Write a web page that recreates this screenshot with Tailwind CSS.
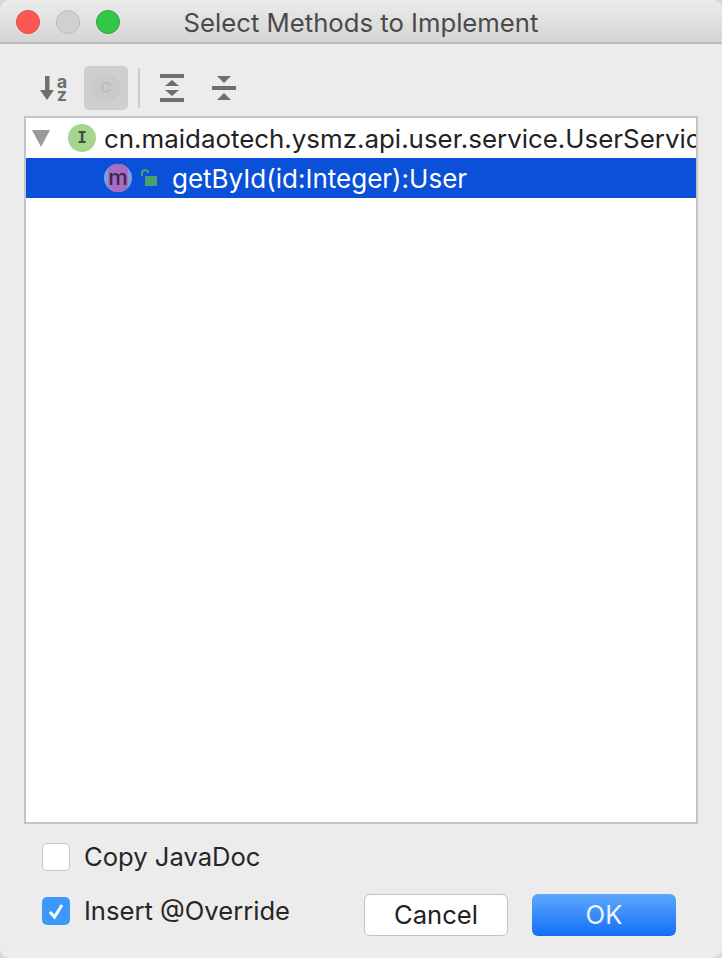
<!DOCTYPE html>
<html lang="en">
<head>
    <meta charset="UTF-8">
    <meta name="viewport" content="width=device-width, initial-scale=1.0">
    <title>Select Methods to Implement</title>
    <script src="https://cdn.jsdelivr.net/npm/@tailwindcss/browser@4"></script>
</head>
<body class="bg-[#d8d8d8] font-['Inter','Liberation_Sans',sans-serif]">
    <div class="w-[722px] h-[958px] bg-[#ececec] rounded-[10px] overflow-hidden flex flex-col">

        <!-- title bar -->
        <div class="relative h-[44px] shrink-0 flex items-center justify-center bg-gradient-to-b from-[#ebebeb] to-[#d5d5d5] border-b-2 border-[#bdbdbd]">
            <div class="absolute left-[16px] top-[10px] flex gap-[16px]">
                <div class="w-[24px] h-[24px] rounded-full bg-[#fc5753] border border-[#df4744]"></div>
                <div class="w-[24px] h-[24px] rounded-full bg-[#d0d0d0] border border-[#bcbcbc]"></div>
                <div class="w-[24px] h-[24px] rounded-full bg-[#33c748] border border-[#27aa35]"></div>
            </div>
            <span class="text-[25.7px] leading-none text-[#4a4a4a] mt-[3px]">Select Methods to Implement</span>
        </div>

        <!-- toolbar -->
        <div class="h-[72px] shrink-0 flex items-center pl-[40px] pt-[16px]">
            <svg class="w-[14px] h-[24px]" viewBox="0 0 14 24" fill="#6e6e6e">
                <rect x="5" y="0" width="4.500" height="16"/>
                <path d="M0 14h14l-7 10z"/>
            </svg>
            <div class="ml-[3px] w-[10px] flex flex-col items-center text-[18px] font-bold leading-[13px] text-[#6e6e6e]">
                <span class="h-[13px]">a</span>
                <span class="h-[13px]">z</span>
            </div>
            <div class="ml-[17px] w-[44px] h-[44px] rounded-[5px] bg-[#cfcfcf] flex items-center justify-center">
                <div class="w-[28px] h-[28px] rounded-full bg-[#cacaca] flex items-center justify-center text-[15px] font-semibold text-[#bcbcbc]">C</div>
            </div>
            <div class="ml-[10px] w-[2px] h-[40px] bg-[#cdcdcd]"></div>
            <svg class="ml-[20px] w-[24px] h-[28px]" viewBox="0 0 24 28" fill="#6e6e6e">
                <rect x="0" y="0" width="24" height="4"/>
                <rect x="0" y="24" width="24" height="4"/>
                <path d="M12 6l7 6H5z"/>
                <path d="M12 22l-7-6h14z"/>
            </svg>
            <svg class="ml-[28px] w-[24px] h-[28px]" viewBox="0 0 24 28" fill="#6e6e6e">
                <rect x="0" y="12" width="24" height="4"/>
                <path d="M5 2h14l-7 7z"/>
                <path d="M5 26h14l-7-7z"/>
            </svg>
        </div>

        <!-- method tree -->
        <div class="mx-[24px] h-[708px] shrink-0 bg-white border-2 border-[#c4c4c4] overflow-hidden">
            <div class="h-[40px] flex items-center whitespace-nowrap">
                <svg class="ml-[6px] w-[18px] h-[17px] shrink-0" viewBox="0 0 18 17" fill="#9a9a9a"><path d="M0 0h18L9 17z"/></svg>
                <div class="ml-[18px] w-[28px] h-[28px] shrink-0 rounded-full bg-[#a5d58f] flex items-center justify-center font-['DejaVu_Sans_Mono',monospace] text-[16px] font-bold text-[#3f4a3a]">I</div>
                <span class="ml-[8px] mt-[2px] shrink-0 text-[25.9px] leading-none text-[#222222]">cn.maidaotech.ysmz.api.user.service.UserService</span>
            </div>
            <div class="h-[40px] bg-[#0a50d8] flex items-center whitespace-nowrap">
                <div class="relative ml-[78px] w-[28px] h-[28px] shrink-0 rounded-full bg-[#7e9fd8] flex items-center justify-center">
                    <div class="absolute left-[4px] top-0 w-[20px] h-[28px] rounded-[8px] bg-[#a86cc4]"></div>
                    <span class="relative text-[22px] font-medium leading-none text-[#3a2a48] -mt-[2px]">m</span>
                </div>
                <svg class="ml-[8px] w-[18px] h-[18px] shrink-0" viewBox="0 0 18 18" fill="none">
                    <path d="M2 7V4a3 3 0 0 1 6 0" stroke="#47a06e" stroke-width="2"/>
                    <rect x="5" y="7" width="12" height="10" fill="#47a06e"/>
                </svg>
                <span class="ml-[14px] mt-[2px] text-[26px] leading-none text-white">getById(id:Integer):User</span>
            </div>
        </div>

        <!-- options and buttons -->
        <div class="flex-1 relative pl-[42px] pr-[46px] flex justify-between items-start">
            <div class="flex flex-col gap-[26px] pt-[19px]">
                <label class="flex items-center gap-[14px] h-[28px]">
                    <span class="w-[28px] h-[28px] rounded-[5px] bg-white border border-[#c8c8c8]"></span>
                    <span class="text-[25.6px] leading-none text-[#262626]">Copy JavaDoc</span>
                </label>
                <label class="flex items-center gap-[14px] h-[28px]">
                    <span class="w-[28px] h-[28px] rounded-[5px] bg-[#3b99fc] flex items-center justify-center">
                        <svg class="w-[18px] h-[18px]" viewBox="0 0 18 18" fill="none"><path d="M3 10l4.500 5L15 3" stroke="white" stroke-width="3"/></svg>
                    </span>
                    <span class="text-[25.6px] leading-none text-[#262626]">Insert @Override</span>
                </label>
            </div>
            <div class="flex gap-[24px] mt-[70px]">
                <button class="w-[144px] h-[42px] rounded-[6px] bg-white border border-[#c4c4c4] text-[25.6px] leading-none text-[#222222]">Cancel</button>
                <button class="w-[144px] h-[42px] rounded-[6px] bg-gradient-to-b from-[#5ba6fb] to-[#0f6ef8] text-[25.6px] leading-none text-[#eaf3ff]">OK</button>
            </div>
        </div>
    </div>
</body>
</html>
